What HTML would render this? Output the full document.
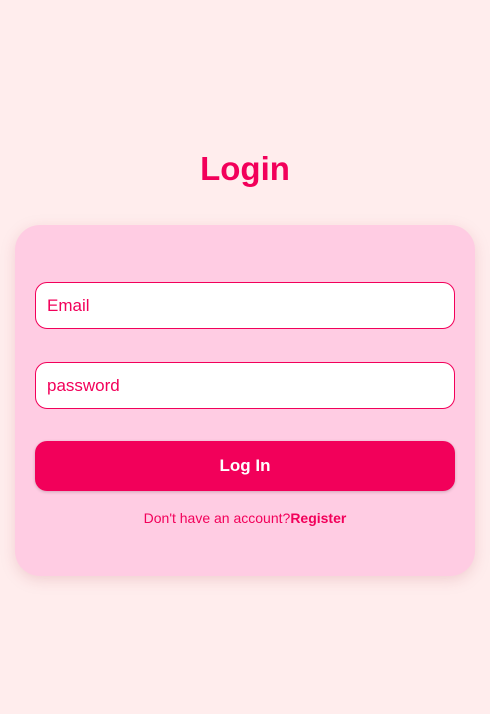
<!DOCTYPE html>
<html><head><style>
body{margin:0;width:490px;height:714px;background:#ffeded;font-family:"Liberation Sans",sans-serif;position:relative;overflow:hidden}
h1{position:absolute;top:148px;left:0;width:490px;text-align:center;margin:0;font-size:33px;font-weight:bold;color:#f2005a;line-height:42px}
.card{position:absolute;left:15px;top:225px;width:460px;height:351px;background:#ffcce3;border-radius:25px;box-shadow:0 4px 14px rgba(200,120,130,0.25)}
.in{position:absolute;left:20px;height:45px;background:#fff;border:1px solid #f2005a;border-radius:12px;font-size:17px;color:#f2005a;line-height:45px;padding-left:11px;box-sizing:content-box;width:407px}
.btn{position:absolute;left:20px;top:216px;width:420px;height:50px;background:#f2005a;border-radius:12px;color:#fff;text-align:center;line-height:50px;font-size:17px;font-weight:bold;box-shadow:0 1px 3px rgba(0,0,0,0.2)}
.reg{position:absolute;left:0;top:283px;width:460px;text-align:center;font-size:14px;color:#f2005a;line-height:20px}
.reg b{font-weight:bold}
</style></head><body>
<h1>Login</h1>
<div class="card">
<div class="in" style="top:57px">Email</div>
<div class="in" style="top:137px">password</div>
<div class="btn">Log In</div>
<div class="reg">Don't have an account?<b>Register</b></div>
</div>
</body></html>
